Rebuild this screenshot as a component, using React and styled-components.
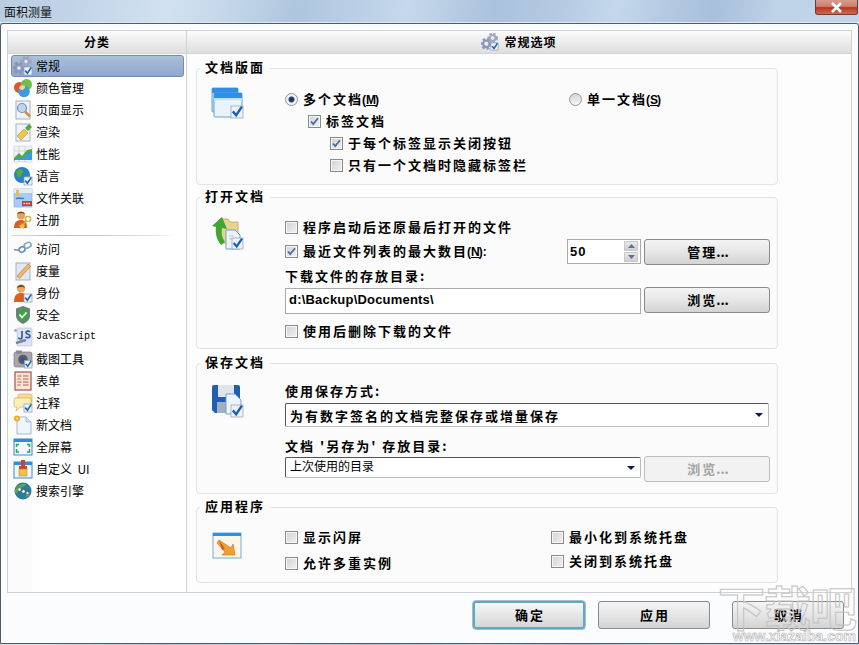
import React from 'react';
import styled, { createGlobalStyle } from 'styled-components';

const Global = createGlobalStyle`
  html, body { margin: 0; padding: 0; background: #fff; }
  body { font-family: "Noto Sans CJK SC", "Liberation Sans", sans-serif; color: #000; }
`;

const cjk = `"Noto Sans CJK SC", "Liberation Sans", sans-serif`;

const Window = styled.div`
  position: relative; width: 859px; height: 645px; overflow: hidden;
  display: flex; flex-direction: column;
  background: linear-gradient(102deg, #b9cde0 0%, #c2d5e8 8%, #d2e1f0 17%, #c6d9ea 22%, #aec7de 30%, #bed2e8 38%, #c6d8ec 41%, #aac2dc 50%, #b4cae2 56%, #c4d7ec 62%, #b2c8e0 68%, #a8c0da 72%, #bed2e8 78%, #c6d8ee 100%);
`;
const TitleBar = styled.div`
  height: 23px; flex: none; display: flex; justify-content: space-between; align-items: flex-start;
  box-shadow: inset 0 -1px 0 #dfe9f3;
`;
const Title = styled.span`
  font: 400 12px/24px ${cjk}; padding-left: 4px; color: #111;
`;
const CloseButton = styled.div`
  width: 43px; height: 15px; margin-right: 1px; display: flex; align-items: center; justify-content: center;
  background: linear-gradient(#d99a8e 0%, #cf7f70 45%, #b9361f 55%, #cf6a52 100%);
  border: 1px solid #6d3b38; border-top: 0; border-radius: 0 0 3px 3px; box-sizing: border-box;
`;
const Client = styled.div`
  flex: 1; min-height: 0; display: flex; flex-direction: column;
  background: #fbfcfd; border: 1px solid #4f5c68; border-radius: 3px 3px 0 0; margin-bottom: 1px;
`;
const Panel = styled.div`
  margin: 6px 6px 0 6px; height: 563px; flex: none; box-sizing: border-box; display: flex;
  border: 1px solid #cfd3d6; background: #fff;
`;
const Sidebar = styled.div`
  width: 179px; flex: none; box-sizing: border-box; display: flex; flex-direction: column;
  border-right: 1px solid #cfd3d6;
`;
const Pane = styled.div`
  flex: 1; min-width: 0; display: flex; flex-direction: column; background: #fdfdfd;
`;
const Header = styled.div`
  height: 22px; flex: none; display: flex; align-items: center; justify-content: center; gap: 5px;
  background: linear-gradient(#fbfbfb, #dedede); border-bottom: 1px solid #d4d4d4;
  font: 700 12px/22px ${cjk}; letter-spacing: 1px;
`;
const CategoryList = styled.div`
  flex: 1; padding-top: 1px;
  background: linear-gradient(90deg, #fbfbfb 0, #fbfbfb 25px, #fff 25px);
`;
const CategoryRow = styled.div`
  height: 22px; display: flex; align-items: center; gap: 3px; box-sizing: border-box;
  margin: 0 2px 0 3px; padding-left: 2px;
  font: 400 12px/22px ${cjk}; color: #000;
  ${p => p.$active && `
    border: 1px solid #6f8db5; border-radius: 3px; padding-left: 1px;
    background: linear-gradient(#aac0db, #8fa9cb);
  `}
`;
const MonoLabel = styled.span`
  font: 400 10px/22px "Liberation Mono", monospace;
`;
const Divider = styled.div`
  height: 7px; box-sizing: border-box; padding-top: 4px; margin: 0 6px 0 3px;
  &::after { content: ''; display: block; height: 1px; background: linear-gradient(90deg, #ddd, #bbb 30%, #ddd 80%, #fff); }
`;
const Stack = styled.div`
  padding: 14px 0 0 9px;
`;
const Group = styled.section`
  position: relative; width: 582px; height: ${p => p.$height}px; margin-bottom: ${p => p.$gap}px;
  box-sizing: border-box; display: flex; background: #fbfbfb;
  border: 1px solid #dfe5ea; border-radius: 4px;
`;
const Legend = styled.h3`
  position: absolute; left: 3px; top: -11px; margin: 0; padding: 0 5px;
  background: linear-gradient(#fdfdfd 55%, #fbfbfb 55%);
  font: 700 13px/18px ${cjk}; letter-spacing: 2px;
`;
const IconCol = styled.div`
  width: 88px; flex: none; box-sizing: border-box; padding: ${p => p.$top}px 0 0 14px;
`;
const Content = styled.div`
  flex: 1; min-width: 0; padding: ${p => p.$top}px 7px 0 0; display: flex; flex-direction: column;
`;
const Row = styled.div`
  display: flex; align-items: ${p => p.$start ? 'flex-start' : 'center'}; gap: 3px;
  height: ${p => p.$h || 22}px; margin-top: ${p => p.$mt || 0}px;
  padding-left: ${p => p.$indent || 0}px;
`;
const Option = styled.label`
  display: flex; align-items: center; gap: 5px; flex: ${p => p.$grow ? 1 : 'none'};
  width: ${p => p.$w ? p.$w + 'px' : 'auto'};
  font: 700 13px/22px ${cjk}; letter-spacing: 2px; white-space: nowrap;
`;
const Key = styled.u`
  font-family: "Liberation Sans", sans-serif; font-size: 12px; letter-spacing: 0;
`;
const Paren = styled.span`
  font-family: "Liberation Sans", sans-serif; font-size: 12px; letter-spacing: 0; font-weight: 700; margin-left: -1px;
`;
const Box = styled.span`
  width: 13px; height: 13px; flex: none; box-sizing: border-box; display: flex; align-items: center; justify-content: center;
  border: 1px solid #8b8b8b; background: linear-gradient(135deg, #d2d2d2, #f1f1f1);
  box-shadow: inset 0 0 0 1px #f6f6f6;
`;
const Radio = styled.span`
  width: 13px; height: 13px; flex: none; box-sizing: border-box; border-radius: 50%;
  border: 1px solid #8f97a3;
  background: ${p => p.$on
    ? 'radial-gradient(circle, #1d3f66 0, #1d3f66 2.6px, #eef2f6 3.4px)'
    : 'linear-gradient(#d4d4d4, #f6f6f6)'};
`;
const Label = styled.div`
  height: 22px; margin-top: ${p => p.$mt || 0}px; font: 700 13px/22px ${cjk}; letter-spacing: 2px; white-space: nowrap;
`;
const Spinner = styled.div`
  width: 74px; height: 25px; flex: none; box-sizing: border-box; display: flex; align-items: center; justify-content: space-between;
  border: 1px solid #a9a9a9; background: #fff; padding: 0 1px 0 2px;
  font: 700 13px/22px "Liberation Sans", sans-serif; letter-spacing: 1px;
`;
const SpinButtons = styled.div`
  width: 14px; display: flex; flex-direction: column; gap: 1px; margin-right: 1px;
`;
const SpinButton = styled.div`
  height: 10px; display: flex; align-items: center; justify-content: center;
  background: linear-gradient(#e8e8e8, #cfcfcf); border: 1px solid #c9c9c9; box-sizing: border-box;
`;
const Button = styled.button`
  width: ${p => p.$w || 126}px; height: ${p => p.$h || 26}px; flex: none; box-sizing: border-box; padding: 0 0 0 2px;
  border: 1px solid #8a8a8a; border-radius: 3px;
  background: linear-gradient(#f4f4f4 0%, #e6e6e6 50%, #d3d3d3 100%);
  font: 700 13px/22px ${cjk}; letter-spacing: 2px; color: #000;
  ${p => p.$primary && `
    border: 2px solid #5ea9c6; background: linear-gradient(#f7f7f7, #e6e6e6 50%, #d6d6d6); 
    box-shadow: 0 0 0 0.5px #5b7f90;
  `}
  &:disabled { color: #a3a3a3; background: #f2f2f2; border-color: #bdbdbd; }
`;
const Dots = styled.span`
  letter-spacing: 0; margin-left: -1px;
`;
const TextField = styled.div`
  width: 356px; height: 26px; flex: none; box-sizing: border-box; margin-top: 1px;
  border: 1px solid #a9a9a9; background: #fff; padding-left: 3px;
  font: 700 13px/22px "Liberation Sans", sans-serif; letter-spacing: 0.2px;
`;
const Combo = styled.div`
  width: ${p => p.$w}px; height: ${p => p.$h}px; flex: none; box-sizing: border-box;
  display: flex; align-items: center; justify-content: space-between;
  border: 1px solid; border-color: #555 #bbb #bbb #555; border-radius: 2px; background: #fff;
  margin-top: ${p => p.$mt || 0}px; padding: 0 4px 0 ${p => p.$pad}px; 
`;
const ComboText = styled.span`
  font: ${p => p.$strong ? 700 : 400} ${p => p.$strong ? 13 : 12}px/18px ${cjk};
  letter-spacing: ${p => p.$strong ? 2 : 0}px; margin-top: ${p => p.$strong ? 1 : -3}px;
`;
const Arrow = styled.span`
  width: 0; height: 0; margin-right: 1px; flex: none;
  border-left: 4px solid transparent; border-right: 4px solid transparent; border-top: 4px solid #0b1a50;
`;
const Columns = styled.div`
  display: flex;
`;
const OptionColumn = styled.div`
  width: ${p => p.$w}px; padding-top: ${p => p.$top}px; display: flex; flex-direction: column;
`;
const OptionRow = styled.div`
  height: ${p => p.$h}px; display: flex; align-items: center;
`;
const Footer = styled.div`
  flex: 1; display: flex; justify-content: flex-end; align-items: flex-start; gap: 13px; padding: 8px 14px 0 0;
  & > :last-child { margin-left: 9px; }
`;
const Watermark = styled.div`
  position: absolute; right: 3px; bottom: 1px; width: 136px; height: 62px; pointer-events: none;
  display: flex; flex-direction: column; align-items: flex-end; color: transparent;
`;
const WatermarkLogo = styled.div`
  font: 700 47px/47px ${cjk}; letter-spacing: -1px; white-space: nowrap;
  -webkit-text-stroke: 1px #c2c2c2;
`;
const WatermarkUrl = styled.div`
  font: 700 14px/14px "Liberation Sans", sans-serif; white-space: nowrap;
  -webkit-text-stroke: 0.6px #b0b0b0;
`;

const Tick = ({ x = 10, y = 10, s = 9 }) => (
  <g>
    <rect x={x} y={y} width={s} height={s} fill="#eef3fa" stroke="#8d9ab0" strokeWidth=".7" />
    <path d={`M${x + s * .15} ${y + s * .45} l${s * .28} ${s * .32} l${s * .48} ${s * .9 * -.8}`} stroke="#1c5fb5" strokeWidth={s * .2} fill="none" />
  </g>
);
const Svg = ({ size = 20, vb = 20, children }) => (
  <svg width={size} height={size} viewBox={`0 0 ${vb} ${vb}`} style={{ flex: 'none' }}>{children}</svg>
);
const Gear = ({ cx, cy, r, c = '#8c95b8' }) => (
  <g>
    <circle cx={cx} cy={cy} r={r} fill="none" stroke={c} strokeWidth={r * .9} strokeDasharray={`${r * .55} ${r * .4}`} />
    <circle cx={cx} cy={cy} r={r * .8} fill="none" stroke={c} strokeWidth={r * .5} />
    <circle cx={cx} cy={cy} r={r * .35} fill="#e8eaf2" />
  </g>
);

const GearsIcon = ({ size = 20 }) => <Svg size={size}><Gear cx={6} cy={12} r={4.6} /><Gear cx={13} cy={5.5} r={4} c="#a0a6c2" /><Tick x={11} y={11} s={8} /></Svg>;
const ColorIcon = () => <Svg><circle cx={6.5} cy={9.5} r={5.5} fill="#e0552c" /><circle cx={13.5} cy={6.5} r={5.5} fill="#6fc04a" /><circle cx={11} cy={13.5} r={5.8} fill="#3f9ae0" /><path d="M6 10c.5-2.500 3-3.500 6-2 .5 2-1 3.500-3 4-1.500-.2-2.500-1-3-2z" fill="#e9d9a8" /></Svg>;
const PageIcon = () => <Svg><rect x={3} y={1} width={14} height={18} fill="#eef3fa" stroke="#a4b2c6" /><circle cx={9} cy={8} r={4.5} fill="#bcd6ee" stroke="#7d8ea6" strokeWidth="1.2" /><path d="M12 11.5l5 5" stroke="#d98b3a" strokeWidth="2.5" /></Svg>;
const RenderIcon = () => <Svg><rect x={3} y={2} width={14} height={17} fill="#eef3fa" stroke="#a4b2c6" /><path d="M4 14l7-7 4 4-7 7z" fill="#ecc84a" stroke="#b58f22" strokeWidth=".6" /><path d="M12 6l4-4 3 3-4 4z" fill="#55a83a" /></Svg>;
const PerfIcon = () => <Svg><rect x={1} y={2} width={18} height={16} fill="#eef2f7" stroke="#c0c8d2" strokeWidth=".5" /><path d="M6 2v16M12 2v16M1 7h18M1 12h18" stroke="#b5bfca" strokeWidth=".5" /><path d="M1 15l5-5 3 3 5-6 5-1v10H1z" fill="#3b9ae0" /><path d="M1 14l5-5 3 3 5-6 5-1v3l-5 1-5 6-3-3-5 5z" fill="#4dae2e" /></Svg>;
const GlobeIcon = () => <Svg><circle cx={9} cy={9} r={8} fill="#2a7fca" /><path d="M4 5c3-3 5-2 6 0s-1 3-2 5-3 2-4-1-1-3 0-4zM12 10c2-1 4 0 4 2s-3 3-4 1z" fill="#4fae3a" /><Tick x={11} y={11} s={8} /></Svg>;
const AssocIcon = () => <Svg><rect x={1} y={1} width={18} height={18} fill="#a7cdf0" stroke="#7ba3cc" strokeWidth=".6" /><rect x={1} y={1} width={18} height={4} fill="#e0ecf8" /><rect x={3} y={2} width={3} height={6} fill="#e5c14a" /><path d="M3 11c3-3 5 1 8-1" stroke="#3a7fc0" strokeWidth="1.4" fill="none" /><rect x={9} y={13} width={10} height={5} fill="#c93a2e" /><path d="M10.5 15.5h7" stroke="#fff" strokeDasharray="1.5 1" strokeWidth="1.4" /></Svg>;
const RegIcon = () => <Svg><circle cx={8} cy={5.5} r={4} fill="#e6a15b" /><path d="M4 4c1-3 7-3 8 0-2-1-6-1-8 0z" fill="#6a4a2a" /><path d="M1 18c0-6 3-8 7-8s6 2 6 8z" fill="#d9601e" /><circle cx={15} cy={9} r={2.6} fill="none" stroke="#d4b13a" strokeWidth="1.4" /><path d="M13 11l-3 4" stroke="#d4b13a" strokeWidth="1.6" /><path d="M9 13l1.2 2 2.2.3-1.6 1.6.4 2.2-2.2-1-2 1 .4-2.2-1.6-1.6 2.2-.3z" fill="#f3c62d" /></Svg>;
const AccessIcon = () => <Svg><path d="M1 11c2-1 3 1 5 0" stroke="#8a8f98" strokeWidth="1.6" fill="none" /><rect x={6} y={8} width={6} height={5} rx={2.5} fill="none" stroke="#5f8fc4" strokeWidth="1.6" transform="rotate(-25 9 10.5)" /><rect x={11} y={4} width={7} height={5} rx={2.5} fill="none" stroke="#7ea6d2" strokeWidth="1.6" transform="rotate(-25 14 6)" /></Svg>;
const MeasureIcon = () => <Svg><rect x={3} y={2} width={14} height={17} fill="#dfe8f4" stroke="#a4b2c6" /><path d="M4 15L15 3l2.5 2.5L6.5 17.5z" fill="#eeb86a" stroke="#b07c2a" strokeWidth=".6" /></Svg>;
const IdIcon = () => <Svg><circle cx={8} cy={5.5} r={4.2} fill="#e9a869" /><path d="M3.8 5c1-4 7.5-4 8.4 0-2-1.4-6-1.4-8.4 0z" fill="#6a4a2a" /><path d="M1 19c0-7 3-9 7-9s6 2 6 9z" fill="#d9601e" /><Tick x={11} y={11} s={8} /></Svg>;
const ShieldIcon = () => <Svg><path d="M10 1l7 2.5v7c0 4-3 6.5-7 8.5-4-2-7-4.500-7-8.500v-7z" fill="#6f7d87" /><path d="M10 3l5 2v5.500c0 3-2 5-5 6.500-3-1.500-5-3.500-5-6.500V5z" fill="#3fa23d" /><path d="M6.500 9.500l2.500 3 4.500-5" stroke="#fff" strokeWidth="1.800" fill="none" /></Svg>;
const JsIcon = () => <Svg><rect x={4} y={1} width={15} height={18} rx={1} fill="#dbe4f4" stroke="#a9b4d0" strokeWidth=".5" /><path d="M9 4v6.500c0 2-3 2-3.500 0M17 5c-1.500-1.500-4-1-4 .8s4 1.200 4 3.200-3 2.200-4.500.8" stroke="#3b56a3" strokeWidth="1.700" fill="none" /><circle cx={2.500} cy={3.500} r={1.400} fill="#8ea7d4" /><path d="M3 16l10-3" stroke="#7b8597" strokeWidth="2.400" /></Svg>;
const CameraIcon = () => <Svg><rect x={1} y={3} width={18} height={15} rx={2} fill="#a9a4ae" stroke="#75707c" strokeWidth=".6" /><rect x={3} y={1.500} width={6} height={3} fill="#8a8590" /><circle cx={10} cy={10.500} r={4.800} fill="#5d5a66" /><circle cx={10} cy={10.500} r={2.400} fill="#2c5a94" /><Tick x={11.500} y={11.500} s={7.500} /></Svg>;
const FormIcon = () => <Svg><rect x={2} y={1} width={16} height={18} fill="#f6e4d6" stroke="#a1574a" strokeWidth="1.200" /><path d="M4.500 5h4M4.500 8h3M4.500 11h4M4.500 14h3M10 5h5.500M10 8h5.500M10 11h5.500M10 14h5.500" stroke="#b5624d" strokeWidth="1.200" /></Svg>;
const NoteIcon = () => <Svg><rect x={5} y={1} width={14} height={10} rx={2} fill="#f5dc8e" stroke="#c8a94e" strokeWidth=".6" /><path d="M3 5h13a2 2 0 0 1 2 2v5a2 2 0 0 1-2 2H7l-4 4 1-4a2 2 0 0 1-3-2V7a2 2 0 0 1 2-2z" fill="#fbeeb8" stroke="#c8a94e" strokeWidth=".6" /><Tick x={11} y={11} s={8} /></Svg>;
const NewDocIcon = () => <Svg><path d="M4 2h9l5 5v12H4z" fill="#eef5fc" stroke="#8fa9c6" strokeWidth=".8" /><path d="M13 2v5h5" fill="#cfe0f0" stroke="#8fa9c6" strokeWidth=".6" /><circle cx={4} cy={3.500} r={3} fill="#f0a81e" /><circle cx={4} cy={3.500} r={1.200} fill="#fbe38a" /></Svg>;
const FullIcon = () => <Svg><rect x={1} y={2} width={18} height={16} fill="#f1f6fb" stroke="#3f88c9" /><rect x={1} y={2} width={18} height={3} fill="#2f8be0" /><path d="M3.500 10V7.500H6M16.500 10V7.500H14M3.500 12v3H6M16.500 12v3H14" stroke="#2ca35a" strokeWidth="1.500" fill="none" /></Svg>;
const CustomIcon = () => <Svg><rect x={1} y={3} width={18} height={16} fill="#f0f6fc" stroke="#3f88c9" /><rect x={1} y={3} width={18} height={3} fill="#2f8be0" /><rect x={8} y={1} width={4} height={7} fill="#c9452c" /><rect x={6} y={7} width={8} height={3} fill="#c9452c" /><rect x={6} y={10} width={8} height={7} fill="#eec33f" stroke="#a98722" strokeWidth=".5" /></Svg>;
const SearchIcon = () => <Svg><circle cx={10} cy={10} r={8.500} fill="#2a7d9a" /><path d="M3 7c3-4 7-5 10-4-1 3-5 3-7 6s-2 4-4 3c-.6-2 0-3.500 1-5zM13 13c1-2 3-2 4-1-.5 2-2 4-4 4.500z" fill="#5aa94a" /><circle cx={6.500} cy={8.500} r={1.800} fill="#eef" stroke="#445" strokeWidth=".5" /><circle cx={10.500} cy={10.500} r={1.800} fill="#eef" stroke="#445" strokeWidth=".5" /><circle cx={14.500} cy={12} r={1.500} fill="#eef" stroke="#445" strokeWidth=".5" /></Svg>;

const LayoutGroupIcon = () => <Svg size={34} vb={34}>
  <rect x={1} y={1} width={26} height={24} rx={1} fill="#bcdcf6" stroke="#5ea8e0" />
  <rect x={1} y={1} width={26} height={5} fill="#2f8fe6" />
  <rect x={3} y={6} width={28} height={24} rx={1} fill="#eaf3fb" stroke="#5ea8e0" />
  <rect x={3} y={6} width={28} height={5} fill="#2f8fe6" />
  <rect x={3} y={11} width={28} height={2} fill="#bfe0f8" />
  <Tick x={20} y={19} s={12} />
</Svg>;
const OpenGroupIcon = () => <Svg size={34} vb={34}>
  <path d="M9 3h8l2 3h8v21H9z" fill="#e8d38e" stroke="#bda64f" strokeWidth=".8" />
  <path d="M11 1L1 10l4 1c-1 7 1 13 5 18l4-3c-3-4-4-9-3-14l5 1z" fill="#3fa62f" />
  <path d="M15 14h9l5 5v14H15z" fill="#eef4fb" stroke="#6f9fd0" />
  <path d="M18 20h5M18 23h3" stroke="#b8c8da" />
  <Tick x={21} y={22} s={11} />
</Svg>;
const SaveGroupIcon = () => <Svg size={34} vb={34}>
  <path d="M1 3a2 2 0 0 1 2-2h24a2 2 0 0 1 2 2v26H4l-3-3z" fill="#1e5fb0" />
  <rect x={7} y={1} width={16} height={12} fill="#dfe5ea" />
  <rect x={6} y={18} width={18} height={11} fill="#9fb0c0" />
  <path d="M15 10h9l6 6v14H15z" fill="#eef4fb" stroke="#7d9fc5" />
  <Tick x={20} y={21} s={12} />
</Svg>;
const AppGroupIcon = () => <Svg size={34} vb={34}>
  <rect x={2} y={4} width={28} height={25} fill="#fdf6e8" stroke="#6eaee0" />
  <rect x={2} y={4} width={28} height={3} fill="#2f8fe6" />
  <path d="M8 11l12 8 2-4 2 11H11l3-3-8-9z" fill="#f0a030" stroke="#d4682a" strokeWidth=".6" />
  <path d="M8 11l6 9-3 1z" fill="#d4552a" />
</Svg>;

const SmallTick = () => (
  <svg width="9" height="9" viewBox="0 0 9 9"><path d="M1 4.500l2.200 2.600L8 1.200" stroke="#4a6fa8" strokeWidth="1.800" fill="none" /></svg>
);
const Check = ({ on, children, grow, w }) => (
  <Option $grow={grow} $w={w}><Box>{on && <SmallTick />}</Box><span>{children}</span></Option>
);
const RadioOption = ({ on, children, w }) => (
  <Option $w={w}><Radio $on={on} /><span>{children}</span></Option>
);
const SpinArrow = ({ up }) => (
  <svg width="7" height="4" viewBox="0 0 7 4"><path d={up ? 'M3.500 0L7 4H0z' : 'M0 0h7L3.500 4z'} fill="#5d6f9a" /></svg>
);

const upper = [
  ['常规', GearsIcon], ['颜色管理', ColorIcon], ['页面显示', PageIcon], ['渲染', RenderIcon],
  ['性能', PerfIcon], ['语言', GlobeIcon], ['文件关联', AssocIcon], ['注册', RegIcon],
];
const lower = [
  ['访问', AccessIcon], ['度量', MeasureIcon], ['身份', IdIcon], ['安全', ShieldIcon],
  ['JavaScript', JsIcon], ['截图工具', CameraIcon], ['表单', FormIcon], ['注释', NoteIcon],
  ['新文档', NewDocIcon], ['全屏幕', FullIcon], ['自定义\u00A0\u00A0UI', CustomIcon], ['搜索引擎', SearchIcon],
];

const Category = ({ label, Icon, active }) => (
  <CategoryRow $active={active}>
    <Icon />
    {label === 'JavaScript' ? <MonoLabel>{label}</MonoLabel> : <span>{label}</span>}
  </CategoryRow>
);

export default function App() {
  return (
    <Window>
      <Global />
      <TitleBar>
        <Title>面积测量</Title>
        <CloseButton>
          <svg width="13" height="11" viewBox="0 0 13 11"><path d="M2 1l9 9M11 1l-9 9" stroke="#fff" strokeWidth="2.600" /></svg>
        </CloseButton>
      </TitleBar>
      <Client>
        <Panel>
          <Sidebar>
            <Header>分类</Header>
            <CategoryList>
              {upper.map(([l, I], i) => <Category key={l} label={l} Icon={I} active={i === 0} />)}
              <Divider />
              {lower.map(([l, I]) => <Category key={l} label={l} Icon={I} />)}
            </CategoryList>
          </Sidebar>
          <Pane>
            <Header><GearsIcon size={18} /><span>常规选项</span></Header>
            <Stack>
              <Group $height={117} $gap={12}>
                <Legend>文档版面</Legend>
                <IconCol $top={18}><LayoutGroupIcon /></IconCol>
                <Content $top={19}>
                  <Row>
                    <RadioOption on w={281}>多个文档<Paren>(</Paren><Key>M</Key><Paren>)</Paren></RadioOption>
                    <RadioOption>单一文档<Paren>(</Paren><Key>S</Key><Paren>)</Paren></RadioOption>
                  </Row>
                  <Row $indent={23}><Check on>标签文档</Check></Row>
                  <Row $indent={45}><Check on>于每个标签显示关闭按钮</Check></Row>
                  <Row $indent={45}><Check>只有一个文档时隐藏标签栏</Check></Row>
                </Content>
              </Group>
              <Group $height={152} $gap={14}>
                <Legend>打开文档</Legend>
                <IconCol $top={18}><OpenGroupIcon /></IconCol>
                <Content $top={18}>
                  <Row><Check>程序启动后还原最后打开的文件</Check></Row>
                  <Row $h={27}>
                    <Check on grow>最近文件列表的最大数目<Paren>(</Paren><Key>N</Key><Paren>):</Paren></Check>
                    <Spinner>50<SpinButtons><SpinButton><SpinArrow up /></SpinButton><SpinButton><SpinArrow /></SpinButton></SpinButtons></Spinner>
                    <Button>管理<Dots>...</Dots></Button>
                  </Row>
                  <Label>下载文件的存放目录:</Label>
                  <Row $h={26}>
                    <TextField>d:\Backup\Documents\</TextField>
                    <Button>浏览<Dots>...</Dots></Button>
                  </Row>
                  <Row $mt={7}><Check>使用后删除下载的文件</Check></Row>
                </Content>
              </Group>
              <Group $height={131} $gap={13}>
                <Legend>保存文档</Legend>
                <IconCol $top={20}><SaveGroupIcon /></IconCol>
                <Content $top={16}>
                  <Label>使用保存方式:</Label>
                  <Combo $w={484} $h={24} $pad={4} $mt={1}>
                    <ComboText $strong>为有数字签名的文档完整保存或增量保存</ComboText>
                    <Arrow />
                  </Combo>
                  <Label $mt={8}>文档 '另存为' 存放目录:</Label>
                  <Row $h={26} $mt={-1} $start>
                    <Combo $w={356} $h={21} $pad={4} $mt={1}>
                      <ComboText>上次使用的目录</ComboText>
                      <Arrow />
                    </Combo>
                    <Button disabled>浏览<Dots>...</Dots></Button>
                  </Row>
                </Content>
              </Group>
              <Group $height={76} $gap={0}>
                <Legend>应用程序</Legend>
                <IconCol $top={21}><AppGroupIcon /></IconCol>
                <Content $top={0}>
                  <Columns>
                    <OptionColumn $w={266} $top={16}>
                      <OptionRow $h={26}><Check>显示闪屏</Check></OptionRow>
                      <OptionRow $h={26}><Check>允许多重实例</Check></OptionRow>
                    </OptionColumn>
                    <OptionColumn $w={219} $top={17}>
                      <OptionRow $h={24}><Check>最小化到系统托盘</Check></OptionRow>
                      <OptionRow $h={24}><Check>关闭到系统托盘</Check></OptionRow>
                    </OptionColumn>
                  </Columns>
                </Content>
              </Group>
            </Stack>
          </Pane>
        </Panel>
        <Footer>
          <Button $primary $w={112} $h={28}>确定</Button>
          <Button $w={112} $h={28}>应用</Button>
          <Button $w={112} $h={28}>取消</Button>
        </Footer>
      </Client>
      <Watermark>
        <WatermarkLogo>下载吧</WatermarkLogo>
        <WatermarkUrl>www.xiazaiba.com</WatermarkUrl>
      </Watermark>
    </Window>
  );
}
